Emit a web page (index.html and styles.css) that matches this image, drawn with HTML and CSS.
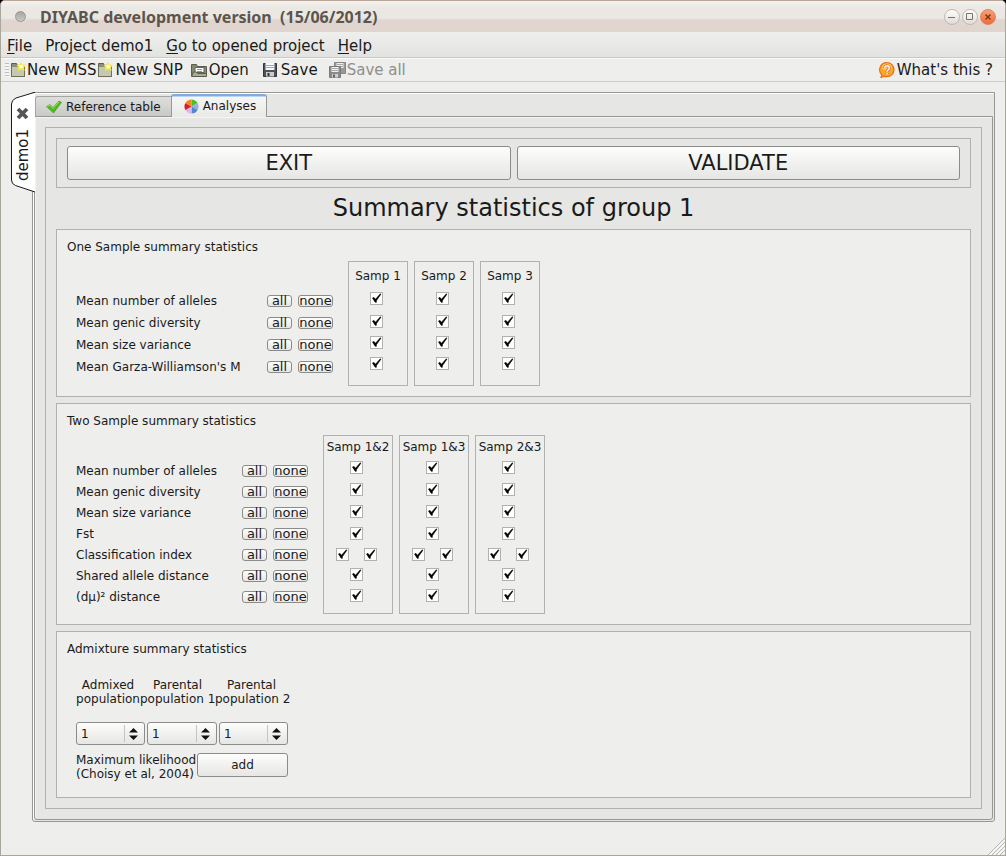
FILE: index.html
```html
<!DOCTYPE html>
<html lang="en">
<head>
<meta charset="utf-8">
<title>DIYABC development version (15/06/2012)</title>
<link rel="stylesheet" href="styles.css">
</head>
<body>
<div class="window">
  <header class="titlebar">
    <span class="dot"></span>
    <h1 class="title">DIYABC development version&nbsp; (15/06/2012)</h1>
    <div class="window-buttons">
      <button class="wbtn" aria-label="Minimize"><svg width="10" height="10" viewBox="0 0 10 10"><path d="M1 5.500h7" stroke="#77736c" fill="none"/></svg></button>
      <button class="wbtn" aria-label="Maximize"><svg width="10" height="10" viewBox="0 0 10 10"><path d="M1.500 1.500h6v6h-6z" stroke="#77736c" fill="none"/></svg></button>
      <button class="wbtn wbtn-close" aria-label="Close"><svg width="10" height="10" viewBox="0 0 10 10"><path d="M2.500 2.500l5 5M7.500 2.500l-5 5" stroke="#7a3018" stroke-width="1.400" fill="none"/></svg></button>
    </div>
  </header>

  <nav class="menubar">
    <button class="menu"><u>F</u>ile</button>
    <button class="menu">Project demo1</button>
    <button class="menu"><u>G</u>o to opened project</button>
    <button class="menu"><u>H</u>elp</button>
  </nav>

  <div class="toolbar">
    <span class="grip"></span>
    <button class="tool tool-new">
      <svg width="16" height="16" viewBox="0 0 16 16"><path d="M1.500 1.500h5l1 2h7v11h-13z" fill="#8d917c" stroke="#5d604d"/><path d="M2 5h6l1-1h5.500v10.500H2z" fill="#c5c9b0"/><path d="M1.500 4v10.500h13V5" fill="none" stroke="#6c705c"/><path d="M11 0l1.500 2.600L16 3l-2 2.500.6 3.500L11 7.500 8 9l.4-3.500L6.500 3l3-.4z" fill="#f7e93a"/><circle cx="11.200" cy="4.600" r="1.900" fill="#fffde0"/></svg>
      New MSS</button>
    <button class="tool tool-new2">
      <svg width="16" height="16" viewBox="0 0 16 16"><path d="M1.500 1.500h5l1 2h7v11h-13z" fill="#8d917c" stroke="#5d604d"/><path d="M2 5h6l1-1h5.500v10.500H2z" fill="#c5c9b0"/><path d="M1.500 4v10.500h13V5" fill="none" stroke="#6c705c"/><path d="M11 0l1.500 2.600L16 3l-2 2.500.6 3.500L11 7.500 8 9l.4-3.500L6.500 3l3-.4z" fill="#f7e93a"/><circle cx="11.200" cy="4.600" r="1.900" fill="#fffde0"/></svg>
      New SNP</button>
    <button class="tool tool-open">
      <svg width="18" height="16" viewBox="0 0 18 16"><path d="M1.500 13.500v-11h5l1 2h9v9z" fill="#85896f" stroke="#5b5e4c"/><path d="M5 5.500h9v5H5z" fill="#fff" stroke="#62655a"/><path d="M7 7.500h5M7 9.500h5" stroke="#999"/><path d="M1.500 14.500l2-4.500h3l1 1.500h9v3z" fill="#a9ad94" stroke="#5b5e4c"/></svg>
      Open</button>
    <button class="tool tool-save">
      <svg width="16" height="16" viewBox="0 0 16 16"><path d="M1.500 1.500h13v13h-13z" fill="#4e5158" stroke="#33353a"/><path d="M3.500 1h9v7h-9z" fill="#f4f7fb"/><path d="M4 3.500h8M4 5.500h8" stroke="#8fa9cf"/><path d="M4 10h8v4.500H4z" fill="#c9cbce"/><path d="M5.500 11h2v3h-2z" fill="#333"/></svg>
      Save</button>
    <button class="tool tool-all" disabled>
      <svg width="17" height="17" viewBox="0 0 17 17"><path d="M5.500.5h11v11h-11z" fill="#999" stroke="#858585"/><path d="M7.500 1h7v5h-7z" fill="#eee"/><path d="M8 2.500h6M8 4.500h6" stroke="#aaa"/><path d="M.5 4.500h11v11H.5z" fill="#8b8b8b" stroke="#7b7b7b"/><path d="M2.500 5h7v5h-7z" fill="#f1f1f1"/><path d="M3 6.500h6M3 8.500h6" stroke="#aaa"/><path d="M3 12h6v3.500H3z" fill="#cfcfcf"/><path d="M4 12.500h2v3H4z" fill="#666"/></svg>
      Save all</button>
    <button class="tool tool-help">
      <svg width="16" height="16" viewBox="0 0 16 16"><path d="M8 .7a7 7 0 0 1 0 14c-1 0-1.800-.1-2.600-.5L2 15.500l.8-2.800A7 7 0 0 1 8 .7z" fill="#fba72d" stroke="#e8701a" stroke-width="1.200"/><ellipse cx="8" cy="5" rx="5" ry="3.500" fill="#ffd36b" opacity=".8"/><path d="M5.700 6a2.300 2.300 0 1 1 3.600 1.900Q8 8.700 8 9.700M8 11v1.500" fill="none" stroke="#e0661a" stroke-width="3"/><path d="M5.700 6a2.300 2.300 0 1 1 3.600 1.900Q8 8.700 8 9.700M8 11v1.500" fill="none" stroke="#fff" stroke-width="1.500"/></svg>
      What's this ?</button>
  </div>

  <main class="workspace">
    <div class="project-tab">
      <svg class="project-shape" width="25" height="102" viewBox="0 0 25 102"><path d="M24 .5h-1L5 6Q.5 8 .5 12v76q0 4 4 5.500L24 100z" fill="#fff"/><path d="M24 .5h-1L5 6Q.5 8 .5 12v76q0 4 4 5.500L24 100" fill="none" stroke="#1c1c1c"/></svg>
      <button class="project-close" aria-label="Close project"><svg width="13" height="13" viewBox="0 0 13 13"><path d="M2 2l9 9M11 2l-9 9" stroke="#555" stroke-width="3.800" fill="none"/></svg></button>
      <button class="project-name">demo1</button>
    </div>
    <div class="pane">
      <div class="tabs">
        <button class="tab"><svg width="16" height="14" viewBox="0 0 16 14"><path d="M.5 6.500l3.500-2 3 3L13 1l2.500 1.500L7.500 13z" fill="#4db81f" stroke="#3a9a18" stroke-width=".6"/><path d="M1.500 6.500L4 5.200l3 3.300L13 2" fill="none" stroke="#9be65c"/></svg>Reference table</button>
        <button class="tab tab-active"><svg width="15" height="15" viewBox="0 0 16 16"><path d="M8 8L8 0.500A7.500 7.500 0 0 1 14.500 4.300z" fill="#4fbf28"/><path d="M8 8L14.500 4.300A7.500 7.500 0 0 1 14.500 11.700z" fill="#8fb4e6"/><path d="M8 8L14.500 11.700A7.500 7.500 0 0 1 8 15.500z" fill="#5585cc"/><path d="M8 8V15.500A7.500 7.500 0 0 1 1.500 11.700z" fill="#d9b9e0"/><path d="M8 8L1.500 11.700A7.500 7.500 0 0 1 1.500 4.300z" fill="#d4202a"/><path d="M8 8L1.500 4.300A7.500 7.500 0 0 1 8 .5z" fill="#f5861f"/></svg>Analyses</button>
      </div>
      <div class="page">
        <div class="frame">
          <div class="actions">
            <button class="big">EXIT</button>
            <button class="big">VALIDATE</button>
          </div>
          <h2 class="heading">Summary statistics of group 1</h2>

          <section class="group">
            <h3 class="group-title">One Sample summary statistics</h3>
            <div class="stats stats-one">
              <div class="rows">
                <div class="row"><span class="name">Mean number of alleles</span><button class="mini">all</button><button class="mini mini-none">none</button></div>
                <div class="row"><span class="name">Mean genic diversity</span><button class="mini">all</button><button class="mini mini-none">none</button></div>
                <div class="row"><span class="name">Mean size variance</span><button class="mini">all</button><button class="mini mini-none">none</button></div>
                <div class="row"><span class="name">Mean Garza-Williamson's M</span><button class="mini">all</button><button class="mini mini-none">none</button></div>
              </div>
              <div class="samples" data-names="Samp 1,Samp 2,Samp 3" data-rows="1,1,1,1"></div>
            </div>
          </section>

          <section class="group">
            <h3 class="group-title">Two Sample summary statistics</h3>
            <div class="stats stats-two">
              <div class="rows">
                <div class="row"><span class="name">Mean number of alleles</span><button class="mini">all</button><button class="mini mini-none">none</button></div>
                <div class="row"><span class="name">Mean genic diversity</span><button class="mini">all</button><button class="mini mini-none">none</button></div>
                <div class="row"><span class="name">Mean size variance</span><button class="mini">all</button><button class="mini mini-none">none</button></div>
                <div class="row"><span class="name">Fst</span><button class="mini">all</button><button class="mini mini-none">none</button></div>
                <div class="row"><span class="name">Classification index</span><button class="mini">all</button><button class="mini mini-none">none</button></div>
                <div class="row"><span class="name">Shared allele distance</span><button class="mini">all</button><button class="mini mini-none">none</button></div>
                <div class="row"><span class="name">(dµ)² distance</span><button class="mini">all</button><button class="mini mini-none">none</button></div>
              </div>
              <div class="samples" data-names="Samp 1&amp;2,Samp 1&amp;3,Samp 2&amp;3" data-rows="1,1,1,1,2,1,1"></div>
            </div>
          </section>

          <section class="group">
            <h3 class="group-title">Admixture summary statistics</h3>
            <div class="admixture">
              <div class="pop-labels">
                <label for="pop0">Admixed<br>population</label>
                <label for="pop1">Parental<br>population 1</label>
                <label for="pop2">Parental<br>population 2</label>
              </div>
              <div class="pop-selects">
                <div class="combo"><select id="pop0"><option>1</option><option>2</option><option>3</option></select><svg class="arrows" width="9" height="12" viewBox="0 0 9 12"><path d="M0 4.500L4.500 0 9 4.500zM0 7.500h9L4.500 12z" fill="#111"/></svg></div>
                <div class="combo"><select id="pop1"><option>1</option><option>2</option><option>3</option></select><svg class="arrows" width="9" height="12" viewBox="0 0 9 12"><path d="M0 4.500L4.500 0 9 4.500zM0 7.500h9L4.500 12z" fill="#111"/></svg></div>
                <div class="combo"><select id="pop2"><option>1</option><option>2</option><option>3</option></select><svg class="arrows" width="9" height="12" viewBox="0 0 9 12"><path d="M0 4.500L4.500 0 9 4.500zM0 7.500h9L4.500 12z" fill="#111"/></svg></div>
              </div>
              <div class="likelihood">
                <span class="ml-text">Maximum likelihood<br>(Choisy et al, 2004)</span>
                <button class="add">add</button>
              </div>
            </div>
          </section>
        </div>
      </div>
    </div>
  </main>
  <svg class="resize" width="17" height="17" viewBox="0 0 17 17"><path d="M0 17L17 0M4 17L17 4M8 17l9-9M12 17l5-5" stroke="#b9b9b6" fill="none"/><path d="M2 17L17 2M6 17L17 6M10 17l7-7" stroke="#fff" fill="none"/></svg>
</div>
<script src="script.js"></script>
</body>
</html>
```
FILE: styles.css
```css
* { box-sizing: border-box; }

body {
  margin: 0;
  background: #000;
  color: #1a1a1a;
  font-family: "DejaVu Sans", sans-serif;
  font-size: 12px;
}

button {
  margin: 0;
  padding: 0;
  border: 0;
  background: none;
  color: inherit;
  font: inherit;
  white-space: nowrap;
}

svg { flex: none; }

h1, h2, h3 { margin: 0; font-weight: normal; }

.window {
  position: relative;
  min-height: 100vh;
  border: 1px solid #a9a69c;
  border-top-color: #b8a698;
  border-radius: 5px 5px 0 0;
  background: #eeeeec;
  overflow: hidden;
}

.titlebar {
  display: flex;
  align-items: center;
  height: 31px;
  padding: 0 9px 0 14px;
  background: linear-gradient(#f5f3f0, #ebe9e4 20%, #ebe7e2 55%, #dfd6cf 62%, #dfd5ce);
}

.dot {
  width: 11px;
  height: 11px;
  margin-right: 14px;
  border: 1px solid #999;
  border-radius: 50%;
  background: linear-gradient(#a5a5a3, #c9c9c7);
}

.title {
  flex: 1;
  color: #5c554e;
  font: bold 16px/20px "Noto Sans", sans-serif;
}

.window-buttons { display: flex; gap: 2px; }

.wbtn {
  display: flex;
  align-items: center;
  justify-content: center;
  width: 16px;
  height: 16px;
  border: 1px solid #c3b9b0;
  border-radius: 50%;
  background: linear-gradient(#fff, #dedbd7);
}

.wbtn-close {
  border-color: #d98563;
  background: linear-gradient(#f9a077, #ee6c38);
}

.menubar {
  display: flex;
  gap: 13px;
  height: 26px;
  padding: 0 6px;
  border-bottom: 1px solid #c9c9c7;
  background: linear-gradient(#efefed, #e2e2e0);
  font-size: 15px;
}

.menu { line-height: 28px; }
.menu u { text-underline-offset: 2px; }

.toolbar {
  display: flex;
  align-items: center;
  height: 24px;
  padding: 0 12px 0 4px;
  border-top: 1px solid #fafaf9;
  border-bottom: 1px solid #cbcbc9;
  font-size: 15px;
}

.grip {
  width: 4px;
  height: 14px;
  margin-right: 1px;
  background: repeating-linear-gradient(#bdbdbb 0 1px, #f6f6f5 1px 3px);
}

.tool {
  display: flex;
  align-items: center;
  gap: 1px;
  height: 22px;
}

.tool-new2 { margin-left: 1px; gap: 2px; }
.tool-open { margin-left: 7px; }
.tool-save { margin-left: 13px; gap: 3px; }
.tool-all { margin-left: 11px; color: #8e8e8c; }
.tool-help { margin-left: auto; gap: 2px; }

.workspace {
  display: flex;
  padding: 10px 10px 33px;
}

.project-tab {
  position: relative;
  z-index: 1;
  display: flex;
  flex: none;
  flex-direction: column;
  align-items: center;
  gap: 9px;
  width: 21px;
  height: 101px;
  padding: 15px 0 0 2px;
}

.project-shape {
  position: absolute;
  top: 0;
  left: 0;
}

.project-close, .project-name { position: relative; }
.project-close { height: 13px; }

.project-name {
  writing-mode: vertical-rl;
  transform: rotate(180deg);
  font-size: 15px;
  line-height: 18px;
}

.pane {
  flex: 1;
  min-width: 0;
  padding: 1px;
  border: 1px solid #979795;
  border-radius: 0 0 3px 3px;
  background: #e6e6e4;
  box-shadow: inset 1px 1px #fff;
}

.tabs {
  display: flex;
  align-items: flex-end;
  height: 22px;
  padding-left: 1px;
}

.tab {
  display: flex;
  align-items: center;
  gap: 4px;
  height: 20px;
  padding: 0 10px;
  border: 1px solid #a5a5a3;
  border-bottom: 0;
  border-radius: 3px 0 0 0;
  background: linear-gradient(#dededc, #c9c9c7);
}

.tab-active {
  position: relative;
  height: 23px;
  margin: 0 0 -1px -1px;
  padding: 0 10px 1px 12px;
  border-color: #979795;
  border-top: 2px solid #86abd9;
  border-radius: 3px 3px 0 0;
  background: linear-gradient(#b9d6fa 0 1px, #f6f6f5 1px, #e9e9e7);
}

.page {
  padding: 10px;
  border: 1px solid #979795;
  border-radius: 0 0 3px 3px;
  box-shadow: inset 1px 1px #f4f4f3;
}

.frame {
  padding: 10px;
  border: 1px solid #b1b1af;
}

.actions {
  display: flex;
  gap: 6px;
  padding: 7px 10px;
  border: 1px solid #b1b1af;
}

.big, .add, .combo {
  border: 1px solid #8b8b89;
  border-radius: 3px;
  background: linear-gradient(#fdfdfc, #f1f1ef 50%, #e6e6e4);
}

.big {
  flex: 1;
  height: 34px;
  font-size: 21px;
  line-height: 28px;
}

.heading {
  font-size: 24px;
  line-height: 41px;
  text-align: center;
}

.group {
  padding: 10px;
  border: 1px solid #b1b1af;
  background: #eeeeec;
}

.group + .group { margin-top: 6px; }

.group-title {
  font-size: 12px;
  line-height: 14px;
}

.stats {
  display: flex;
  gap: 15px;
  margin: 7px 0 0 9px;
}

.row {
  display: flex;
  align-items: center;
  gap: 6px;
  height: 22px;
}

.stats-one .rows { padding-top: 29px; }
.stats-two .rows { padding-top: 25px; }
.stats-two .row { height: 21px; }
.name { width: 185px; white-space: nowrap; }
.stats-two .name { width: 160px; }

.mini {
  width: 25px;
  height: 12px;
  border: 1px solid #8b8b89;
  border-radius: 3px;
  background: linear-gradient(#fdfdfc, #e6e6e4);
  font-size: 13px;
  line-height: 10px;
}

.mini-none { width: 35px; }

.samples { display: flex; gap: 6px; }

.sample {
  width: 60px;
  padding: 7px 0 11px;
  border: 1px solid #b1b1af;
  text-align: center;
}

.stats-two .sample { width: 70px; padding: 4px 0 7px; }

.sample-name {
  line-height: 14px;
  white-space: nowrap;
}

.checks {
  display: grid;
  grid-template-rows: 23px 22px 20px 22px;
  margin-top: 4px;
  padding-right: 3px;
}

.stats-two .checks {
  grid-template-rows: 22px 22px 22px 22px 20px 20px 22px;
  margin-top: 2px;
}

.check-row {
  display: flex;
  align-items: center;
  justify-content: center;
  gap: 15px;
}

.check {
  position: relative;
  width: 13px;
  height: 13px;
}

.check input {
  display: block;
  width: 13px;
  height: 13px;
  margin: 0;
  border: 1px solid #b1b1af;
  background: #fff;
  appearance: none;
}

.check svg {
  position: absolute;
  top: 0;
  left: 0;
  pointer-events: none;
  visibility: hidden;
}

.check input:checked + svg { visibility: visible; }

.admixture {
  width: 212px;
  margin: 22px 0 6px 9px;
}

.pop-labels {
  display: grid;
  grid-template-columns: 64px 75px 73px;
  line-height: 14px;
  text-align: center;
  white-space: nowrap;
}

.pop-selects {
  display: grid;
  grid-template-columns: 69px 70px 69px;
  gap: 2px;
  margin-top: 16px;
}

.combo {
  position: relative;
  height: 23px;
}

.combo select {
  width: 100%;
  height: 21px;
  padding: 0 20px 0 4px;
  border: 0;
  background: linear-gradient(#c4c4c2, #c4c4c2) right 19px center / 1px 17px no-repeat;
  color: inherit;
  font: inherit;
  appearance: none;
}

.arrows {
  position: absolute;
  top: 5px;
  right: 6px;
  pointer-events: none;
}

.likelihood {
  display: flex;
  gap: 2px;
  margin-top: 8px;
  line-height: 14px;
  white-space: nowrap;
}

.ml-text { width: 119px; }

.add { flex: 1; height: 24px; }

.resize {
  position: absolute;
  right: 0;
  bottom: 0;
}
```
FILE: script.js
```js
// Builds one bordered column of tick boxes per sample.
document.querySelectorAll('.samples').forEach(function (holder) {
  var rows = holder.dataset.rows.split(',').map(Number);
  var statNames = Array.from(holder.parentElement.querySelectorAll('.name'), function (n) {
    return n.textContent;
  });
  holder.dataset.names.split(',').forEach(function (name) {
    var sample = document.createElement('div');
    sample.className = 'sample';
    var title = document.createElement('div');
    title.className = 'sample-name';
    title.textContent = name;
    var checks = document.createElement('div');
    checks.className = 'checks';
    rows.forEach(function (count, i) {
      var row = document.createElement('div');
      row.className = 'check-row';
      for (var k = 0; k < count; k++) {
        var label = document.createElement('label');
        label.className = 'check';
        label.innerHTML = '<input type="checkbox" checked>' +
          '<svg width="13" height="13" viewBox="0 0 13 13"><path d="M2.500 6l1.500-.6L5.500 7.300 10.300 1.800 10.900 2.200 6.500 8.500 6.200 10.500 5 10z" fill="#000" stroke="#000" stroke-width=".6"/></svg>';
        label.firstChild.setAttribute('aria-label', statNames[i] + ', ' + name);
        row.appendChild(label);
      }
      checks.appendChild(row);
    });
    sample.append(title, checks);
    holder.appendChild(sample);
  });
});
```
